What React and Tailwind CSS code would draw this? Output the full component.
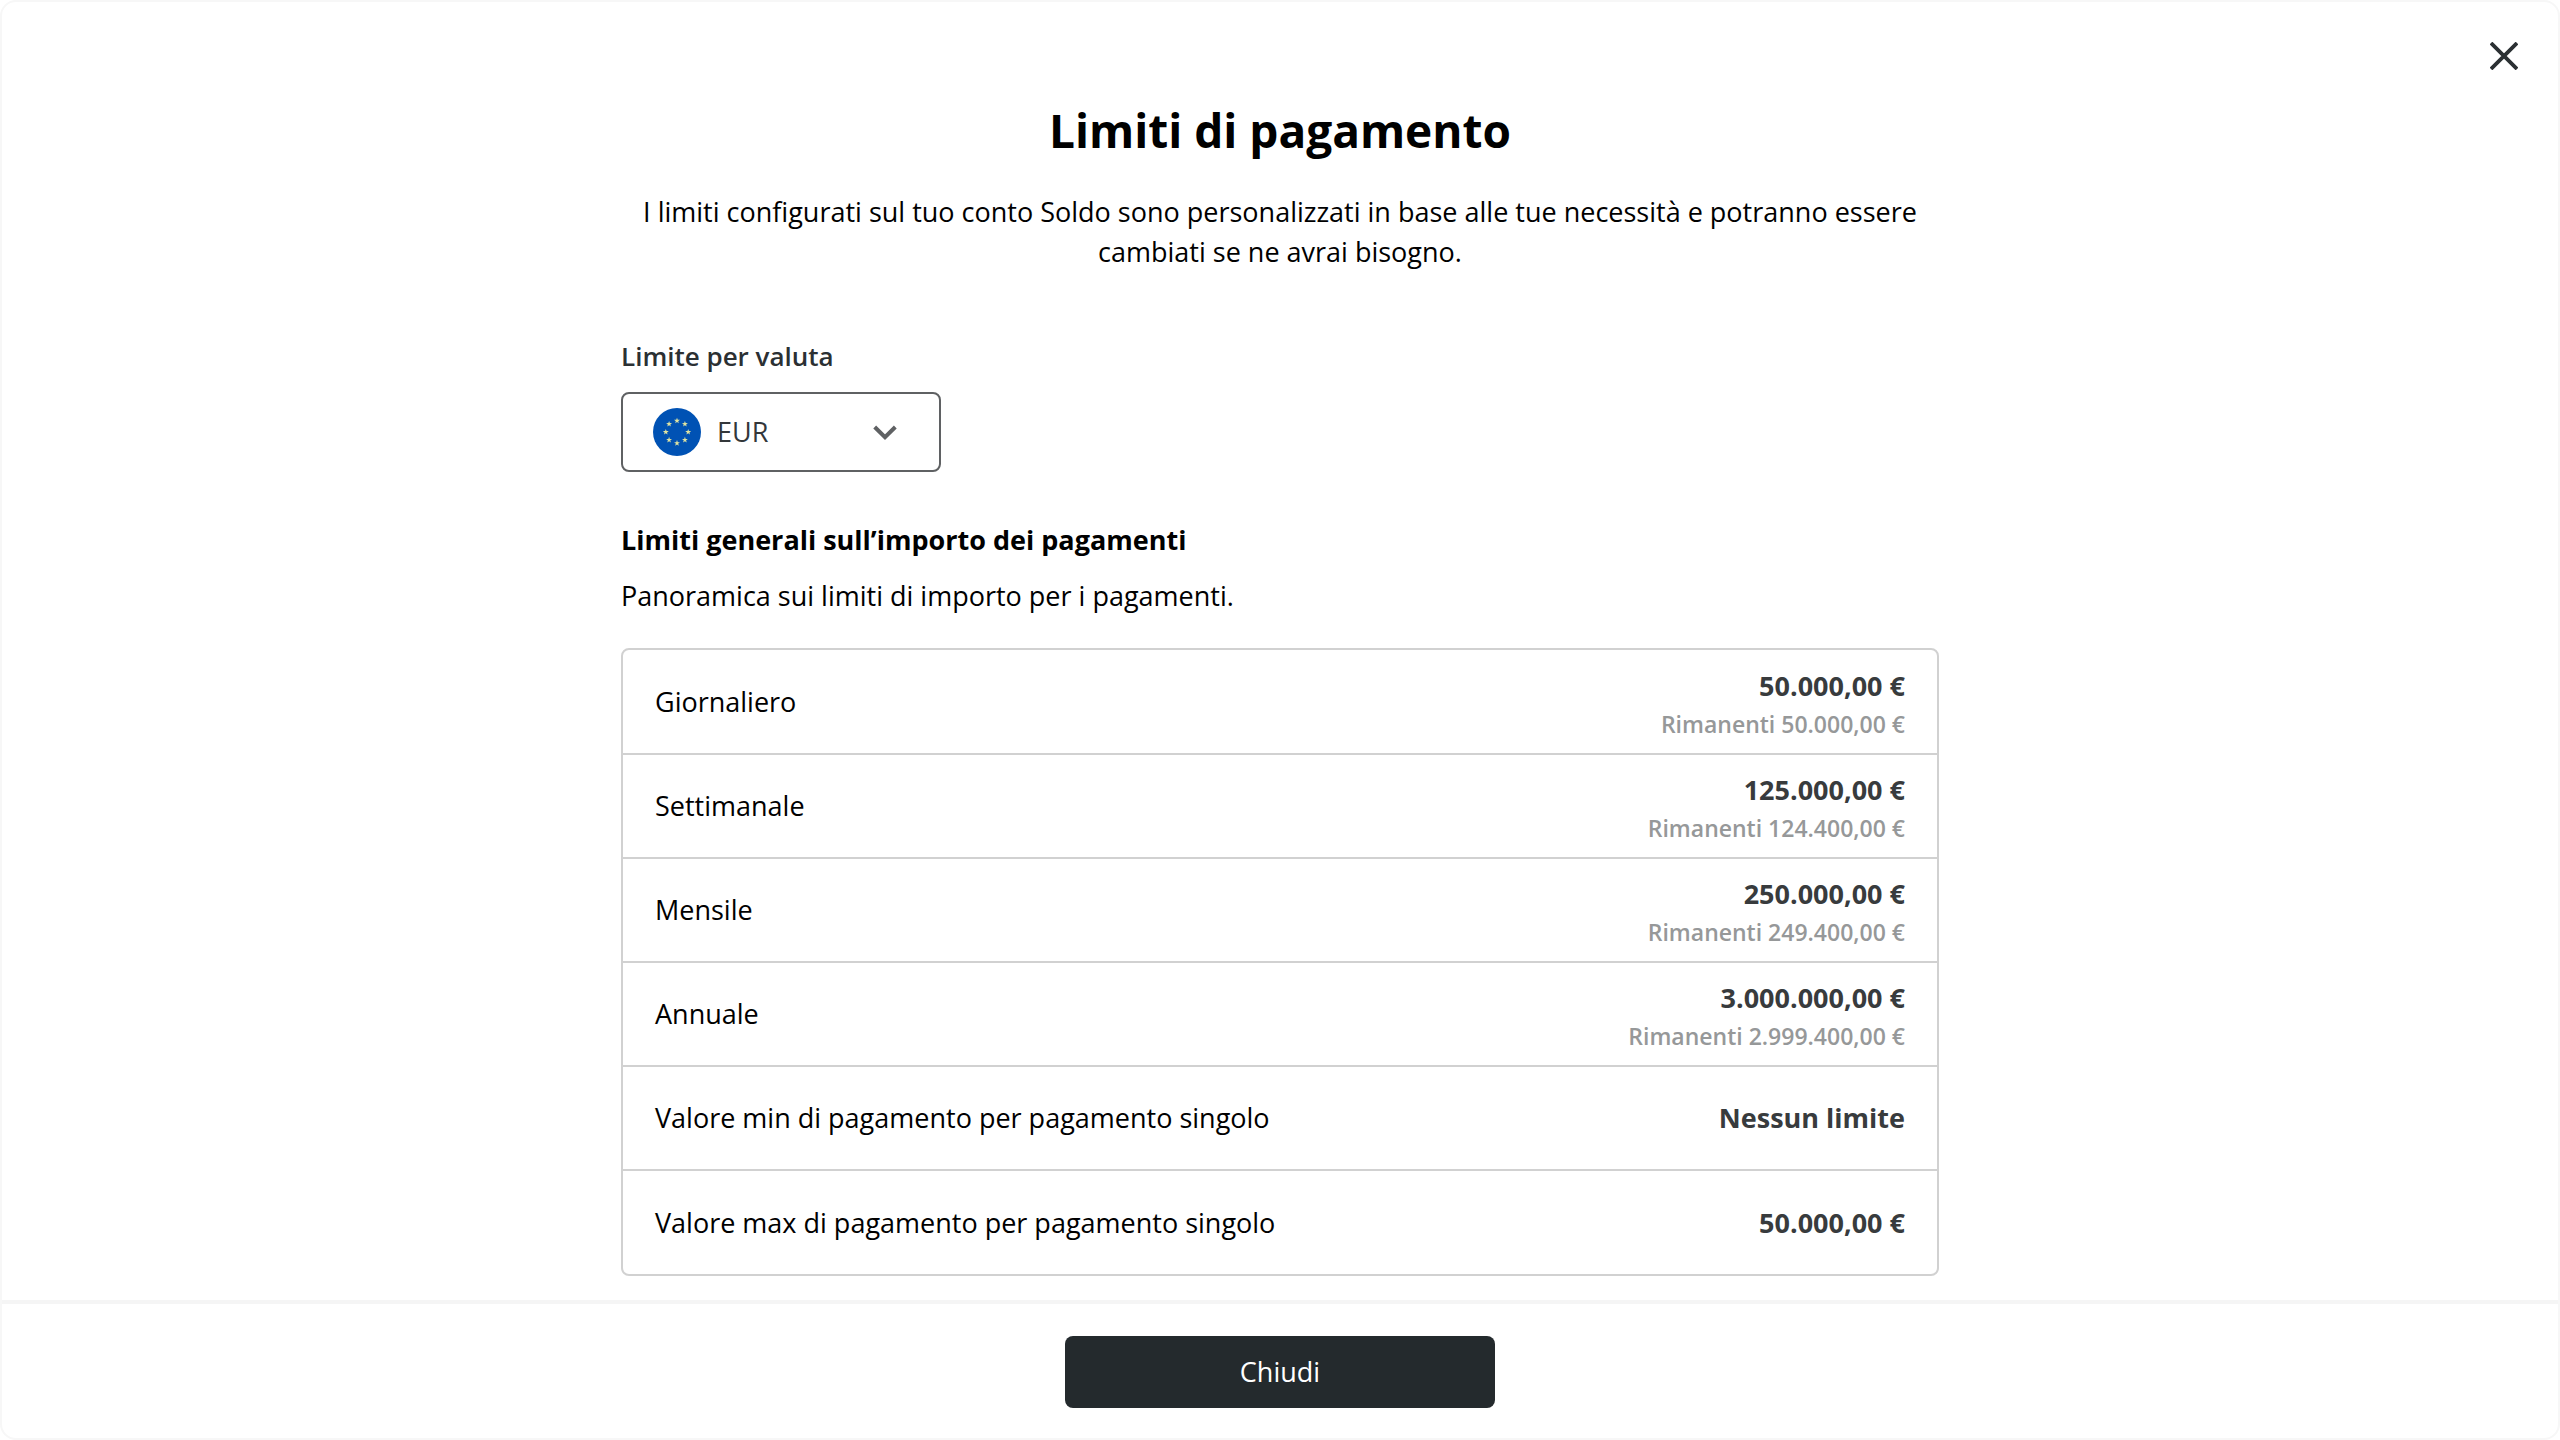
import React, { useState } from 'react'

const limits = [
    { label: 'Giornaliero', amount: '50.000,00 €', remaining: '50.000,00 €' },
    { label: 'Settimanale', amount: '125.000,00 €', remaining: '124.400,00 €' },
    { label: 'Mensile', amount: '250.000,00 €', remaining: '249.400,00 €' },
    { label: 'Annuale', amount: '3.000.000,00 €', remaining: '2.999.400,00 €' },
    { label: 'Valore min di pagamento per pagamento singolo', amount: 'Nessun limite' },
    { label: 'Valore max di pagamento per pagamento singolo', amount: '50.000,00 €' },
]

const STAR = 'M0 -3.1 L0.75 -1 L2.95 -0.95 L1.2 0.4 L1.8 2.5 L0 1.25 L-1.8 2.5 L-1.2 0.4 L-2.95 -0.95 L-0.75 -1 Z'

const EuFlag = ({ className }) => (
    <svg className={className} viewBox="0 0 48 48" aria-hidden="true">
        <circle cx="24" cy="24" r="24" fill="#0052b4" />
        {Array.from({ length: 8 }).map((_, i) => {
            const angle = (i * Math.PI) / 4
            return (
                <path
                    key={i}
                    d={STAR}
                    fill="#dfe3a0"
                    transform={`translate(${24 + 11.2 * Math.sin(angle)} ${24 - 11.2 * Math.cos(angle)})`}
                />
            )
        })}
    </svg>
)

const CurrencySelect = ({ value, onChange }) => (
    <div className="mt-4 relative w-80">
        <select
            id="currency"
            value={value}
            onChange={e => onChange(e.target.value)}
            className="appearance-none w-full h-20 pl-[94px] pr-20 rounded-lg border-2 border-[#5f6163] bg-white text-[27px] text-[#33373a]"
        >
            <option value="EUR">EUR</option>
        </select>
        <EuFlag className="absolute left-8 top-4 size-12 pointer-events-none" />
        <svg
            className="absolute right-11 top-7 size-6 pointer-events-none"
            viewBox="0 0 24 24"
            fill="none"
            stroke="#5f6163"
            strokeWidth="4"
            aria-hidden="true"
        >
            <path d="M1.7 7 L12 17.2 L22.3 7" />
        </svg>
    </div>
)

const LimitsTable = () => (
    <div className="mt-8 rounded-lg border-2 border-[#d1d1d1]">
        <table aria-labelledby="limits-title" className="w-full">
            <tbody>
                {limits.map(limit => (
                    <tr key={limit.label} className="h-[104px] border-t-2 border-[#d1d1d1] first:border-t-0">
                        <th scope="row" className="pl-8 text-left font-normal">{limit.label}</th>
                        <td className="pr-8 text-right">
                            <p className="text-[27px] leading-11 font-bold text-[#383b3d]">{limit.amount}</p>
                            {limit.remaining && (
                                <p className="text-[23px] leading-8 font-semibold text-[#969899]">Rimanenti {limit.remaining}</p>
                            )}
                        </td>
                    </tr>
                ))}
            </tbody>
        </table>
    </div>
)

const App = () => {
    const [currency, setCurrency] = useState('EUR')

    return (
        <div
            role="dialog"
            aria-labelledby="dialog-title"
            className="relative min-h-screen flex flex-col rounded-2xl border-2 border-[#f7f7f7] bg-white font-['Open_Sans','Noto_Sans',sans-serif] text-[27px] leading-10 text-black"
        >
            <button type="button" aria-label="Chiudi finestra" className="absolute top-8 right-8 p-2 cursor-pointer">
                <svg className="size-7" viewBox="0 0 28 28" fill="none" stroke="#2b3033" strokeWidth="3.8" aria-hidden="true">
                    <path d="M1 1 L27 27 M27 1 L1 27" />
                </svg>
            </button>

            <main className="grow w-full max-w-[1318px] mx-auto pt-24">
                <h1 id="dialog-title" className="text-center text-[46px] leading-[64px] font-bold">Limiti di pagamento</h1>
                <p className="mt-[30px] text-center">
                    I limiti configurati sul tuo conto Soldo sono personalizzati in base alle tue necessità e potranno essere cambiati se ne avrai bisogno.
                </p>

                <label htmlFor="currency" className="mt-16 block text-[26px] leading-10 font-semibold text-[#2b3033]">Limite per valuta</label>
                <CurrencySelect value={currency} onChange={setCurrency} />

                <h2 id="limits-title" className="mt-12 font-bold">Limiti generali sull’importo dei pagamenti</h2>
                <p className="mt-4">Panoramica sui limiti di importo per i pagamenti.</p>
                <LimitsTable />
            </main>

            <footer className="flex justify-center border-t-4 border-[#f5f5f5] pt-8 pb-[30px]">
                <button type="button" className="w-[430px] h-[72px] rounded-lg bg-[#242a2d] text-white cursor-pointer">Chiudi</button>
            </footer>
        </div>
    )
}

export default App
